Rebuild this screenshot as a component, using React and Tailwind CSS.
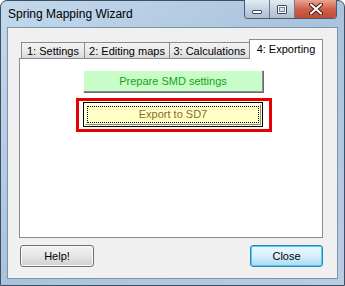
export default function App() {
  const tabs = [
    { label: '1: Settings', w: 'w-[64px]' },
    { label: '2: Editing maps', w: 'w-[86px]' },
    { label: '3: Calculations', w: 'w-[81px]' },
  ];

  return (
    <div className="w-[345px] h-[286px] overflow-hidden bg-white">
      <div
        className="w-[345px] h-[286px] flex flex-col rounded-t-[7px] border border-[#3f4f61] bg-gradient-to-br from-[#c3d8ec] via-[#a9c3dd] to-[#b7cde3]"
        style={{ fontFamily: '"Liberation Sans", Arial, sans-serif' }}
      >
        {/* Title bar */}
        <div className="h-[26px] flex items-start shrink-0">
          <div className="pl-[7px] pt-[5px] text-[12px] leading-[16px] text-black">Spring Mapping Wizard</div>
          <div className="ml-auto mr-[7px] -mt-px flex h-[19px] rounded-b-[4px] border border-t-0 border-[#4b5b6e] overflow-hidden">
            <div className="w-[25px] flex items-center justify-center border-r border-[#6c7c8e] bg-gradient-to-b from-[#e3ebf3] via-[#c5d3e1] to-[#aebfd1]">
              <div className="w-[10px] h-[4px] mt-[5px] rounded-[1px] border border-[#3d4a58] bg-white" />
            </div>
            <div className="w-[25px] flex items-center justify-center border-r border-[#6c7c8e] bg-gradient-to-b from-[#e3ebf3] via-[#c5d3e1] to-[#aebfd1]">
              <div className="w-[10px] h-[9px] rounded-[1px] border border-[#3d4a58] bg-white p-[1px]">
                <div className="w-full h-full border border-[#7d8a98] bg-[#d8e0e8]" />
              </div>
            </div>
            <div className="w-[41px] flex items-center justify-center bg-gradient-to-b from-[#e8a493] via-[#d0604a] to-[#c24a35]">
              <svg width="14" height="12" viewBox="0 0 14 12">
                <path d="M2 1.5 L12 10.5 M12 1.5 L2 10.5" stroke="#4a1c14" strokeWidth="4" strokeLinecap="round" />
                <path d="M2 1.5 L12 10.5 M12 1.5 L2 10.5" stroke="#ffffff" strokeWidth="2" strokeLinecap="round" />
              </svg>
            </div>
          </div>
        </div>

        {/* Client area */}
        <div className="mx-[6px] h-[252px] border border-[#7f93a8] bg-[#f0f0f0] pt-[11px] pl-[11px]">
          <div className="w-[304px]">
            {/* Tabs */}
            <div className="flex items-end h-[19px] pl-[2px] text-[11px] leading-[14px] text-black">
              {tabs.map((t) => (
                <div
                  key={t.label}
                  className={`${t.w} h-[16px] -mr-px flex items-center justify-center border border-b-0 border-[#898c95] bg-gradient-to-b from-[#f2f2f2] via-[#ebebeb] to-[#d9d9d9]`}
                >
                  {t.label}
                </div>
              ))}
              <div className="w-[74px] h-[20px] -mb-px relative z-10 flex items-start justify-center pt-[2px] border border-b-0 border-[#898c95] bg-white">
                4: Exporting
              </div>
            </div>

            {/* Panel */}
            <div className="h-[180px] border border-[#898c95] bg-white pl-[63px] pt-[11px] flex flex-col items-start text-[11px]">
              <div className="w-[180px] h-[22px] flex items-center justify-center bg-[#c8fcc8] text-[#14a314] border border-t-[#ffffff] border-l-[#ffffff] border-r-[#8f8f8f] border-b-[#8f8f8f] shadow-[1px_1px_0_#6a6a6a]">
                Prepare SMD settings
              </div>
              <div className="mt-[6px] -ml-[7px] w-[196px] h-[34px] border-[3px] border-[#e60000] pl-[4px] pt-[1px]">
                <div className="w-[180px] h-[25px] border border-black p-px bg-[#ffffc8]">
                  <div className="w-full h-full border border-t-white border-l-white border-r-[#8f8f8f] border-b-[#8f8f8f] p-px">
                    <div className="w-full h-full border border-dotted border-black flex items-center justify-center text-[#8a6e1c]">
                      Export to SD7
                    </div>
                  </div>
                </div>
              </div>
            </div>

            {/* Footer buttons */}
            <div className="mt-[7px] pl-[1px] flex justify-between text-[11px] text-black">
              <div className="w-[74px] h-[22px] rounded-[3px] border border-[#707070] bg-gradient-to-b from-[#f2f2f2] via-[#e6e6e6] to-[#cfcfcf] flex items-center justify-center shadow-[inset_0_0_0_1px_#fafafa]">
                Help!
              </div>
              <div className="w-[73px] h-[22px] rounded-[3px] border border-[#3c7fb1] bg-gradient-to-b from-[#eaf6fd] via-[#d9f0fc] to-[#a7d9f5] flex items-center justify-center shadow-[inset_0_0_0_1px_#48d0f5]">
                Close
              </div>
            </div>
          </div>
        </div>
      </div>
    </div>
  );
}
